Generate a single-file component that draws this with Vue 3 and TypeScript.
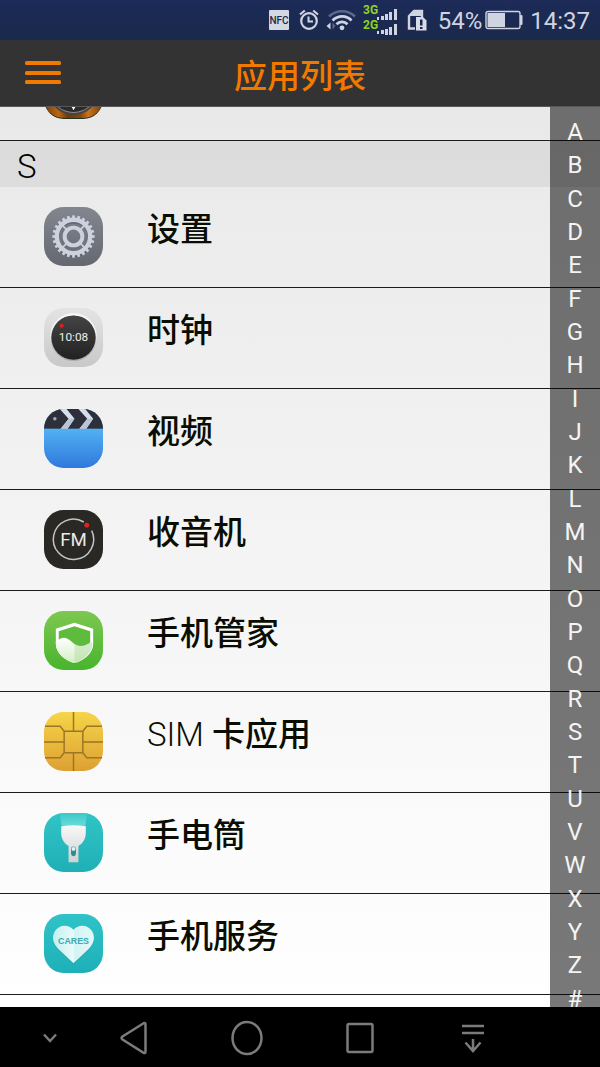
<script setup lang="ts">
interface AppEntry {
  id: string
  name: string
  latin?: string
}

const section = 'S'

const apps: AppEntry[] = [
  { id: 'settings', name: '设置' },
  { id: 'clock', name: '时钟' },
  { id: 'video', name: '视频' },
  { id: 'radio', name: '收音机' },
  { id: 'manager', name: '手机管家' },
  { id: 'sim', latin: 'SIM', name: ' 卡应用' },
  { id: 'torch', name: '手电筒' },
  { id: 'service', name: '手机服务' },
]

const letters: string[] = [...'ABCDEFGHIJKLMNOPQRSTUVWXYZ#']

const teeth: number[] = Array.from({ length: 24 }, (_, i) => i * 15)
</script>

<template>
  <div class="screen">
    <div class="status">
      <svg class="st-nfc" viewBox="0 0 20 20" width="20" height="20" aria-hidden="true">
        <rect width="20" height="20" rx="1" fill="#d3d8e3" />
        <text x="10" y="14" text-anchor="middle" font-family="Roboto, sans-serif" font-size="10" font-weight="500" fill="#1b284d">NFC</text>
      </svg>
      <svg class="st-alarm" viewBox="0 0 20 22" width="20" height="22" fill="none" stroke="#cfd4e0" aria-hidden="true">
        <circle cx="10" cy="12" r="7.8" stroke-width="2.2" />
        <path d="M1 5.500 5.800 1.500M19 5.500 14.200 1.500" stroke-width="2.200" />
        <path d="M9.500 7.500V12.500H14" stroke-width="2" />
      </svg>
      <svg class="st-wifi" viewBox="0 0 31 22" width="31" height="22" fill="none" aria-hidden="true">
        <path d="M3 7.500C10 .4 22 .4 29 7.500" stroke="#5c688a" stroke-width="2.600" />
        <path d="M6.500 11.500C12 6 20.500 6 25.500 11.500" stroke="#cfd4e0" stroke-width="2.800" />
        <path d="M10.500 15.200C13.500 12.200 18.500 12.200 21.500 15.200" stroke="#cfd4e0" stroke-width="2.800" />
        <circle cx="16" cy="18.800" r="2.400" fill="#cfd4e0" />
        <path d="M4.500 13.500V20.500L.5 17z" fill="#cfd4e0" />
        <path d="M6.500 13.500V20.500L9.500 17z" fill="#5c688a" />
      </svg>
      <svg class="st-signal" viewBox="0 0 34 32" width="34" height="32" aria-hidden="true">
        <g font-family="Roboto, sans-serif" font-size="12" font-weight="700" fill="#8fd41c">
          <text x="0" y="10">3G</text>
          <text x="0" y="25">2G</text>
        </g>
        <path d="M14 13h2v3h-2zM18 12h3v4h-3zM22 10h3v6h-3zM26 8h3v8h-3zM31 5h3v11h-3zM14 27h2v3h-2zM18 26h3v4h-3zM22 25h3v6h-3zM26 23h3v8h-3zM31 20h3v11h-3z" fill="#cfd4e0" />
      </svg>
      <svg class="st-card" viewBox="0 0 20 22" width="20" height="22" aria-hidden="true">
        <path d="M2 7 7 2H15V8M8 19.500H2V6.500" fill="none" stroke="#cfd4e0" stroke-width="2.400" />
        <path d="M2 7 7 1h9v6H2z" fill="#cfd4e0" />
        <path d="M9 8h7l3.500 3.500V21.500H9z" fill="#d8dce6" />
        <path d="M13 10.500h2.500v6H13zM13 18h2.500v2H13z" fill="#1b284d" />
      </svg>
      <span class="st-percent">54%</span>
      <svg class="st-battery" viewBox="0 0 38 20" width="38" height="20" aria-hidden="true">
        <rect x="1" y="1.500" width="34" height="17" rx="2" fill="none" stroke="#cfd4e0" stroke-width="1.400" />
        <rect x="2.500" y="3" width="17.500" height="14" fill="#cfd4e0" />
        <rect x="35" y="5" width="2.500" height="10" rx="1" fill="#cfd4e0" />
      </svg>
      <time class="st-time">14:37</time>
    </div>

    <header class="bar">
      <button class="menu" type="button" aria-label="菜单">
        <svg viewBox="0 0 36 24" width="36" height="24" fill="#f27900">
          <rect y="0" width="36" height="4" rx="1.500" />
          <rect y="10" width="36" height="4" rx="1.500" />
          <rect y="19" width="36" height="4" rx="1.500" />
        </svg>
      </button>
      <h1>应用列表</h1>
    </header>

    <main class="body">
      <div class="list">
        <div class="row tail">
          <svg class="icon" viewBox="0 0 60 60" aria-hidden="true">
            <defs>
              <linearGradient id="wood" x1="0" x2="1" y1="0" y2="0">
                <stop offset="0" stop-color="#7a3c08" />
                <stop offset=".25" stop-color="#bd6812" />
                <stop offset=".4" stop-color="#71370a" />
                <stop offset=".62" stop-color="#8a450b" />
                <stop offset=".75" stop-color="#c9741a" />
                <stop offset="1" stop-color="#7a3c08" />
              </linearGradient>
            </defs>
            <rect width="60" height="60" rx="20" fill="#26321c" />
            <rect width="60" height="59" rx="20" fill="url(#wood)" />
            <circle cx="30" cy="30" r="26" fill="#444" />
            <circle cx="30" cy="30" r="24" fill="#8a8a8a" />
            <circle cx="30" cy="29.500" r="23.500" fill="#2b2b2b" />
            <path d="M28 47.500h4L30 51z" fill="#fff" />
          </svg>
        </div>

        <h2>{{ section }}</h2>

        <a v-for="app in apps" :key="app.id" class="row" :href="'#' + app.id">
          <svg v-if="app.id === 'settings'" class="icon" viewBox="0 0 60 60" aria-hidden="true">
            <defs>
              <linearGradient id="slate" x1="0" x2="0" y1="0" y2="1">
                <stop offset="0" stop-color="#84868f" />
                <stop offset="1" stop-color="#646870" />
              </linearGradient>
            </defs>
            <rect width="60" height="60" rx="20" fill="url(#slate)" />
            <circle cx="30" cy="32" r="17" fill="none" stroke="#50545e" stroke-width="4" opacity=".5" />
            <g stroke="#cdd1de" fill="none">
              <circle cx="30" cy="30" r="17" stroke-width="4.400" />
              <circle cx="30" cy="30" r="9" stroke-width="4" />
              <path d="M19 19l4.500 4.500M41 19l-4.500 4.500M19 41l4.500-4.500M41 41l-4.500-4.500" stroke-width="1.800" />
              <path v-for="angle in teeth" :key="angle" d="M30 8.500V12" stroke-width="2.800" :transform="`rotate(${angle} 30 30)`" />
            </g>
          </svg>

          <svg v-else-if="app.id === 'clock'" class="icon" viewBox="0 0 60 60" aria-hidden="true">
            <defs>
              <linearGradient id="silver" x1="0" x2="0" y1="0" y2="1">
                <stop offset="0" stop-color="#e4e4e4" />
                <stop offset="1" stop-color="#c8c8c8" />
              </linearGradient>
              <linearGradient id="dial" x1="0" x2="0" y1="0" y2="1">
                <stop offset="0" stop-color="#444" />
                <stop offset="1" stop-color="#222" />
              </linearGradient>
            </defs>
            <rect width="60" height="60" rx="20" fill="url(#silver)" />
            <circle cx="30" cy="28.500" r="23.500" fill="#f6f6f6" />
            <circle cx="30" cy="31" r="23" fill="#999" opacity=".6" />
            <circle cx="30" cy="30" r="22.500" fill="url(#dial)" />
            <circle cx="18" cy="18" r="2" fill="#e02020" />
            <text x="30" y="34" text-anchor="middle" font-family="Roboto, sans-serif" font-size="12" fill="#f0f0f0">10:08</text>
          </svg>

          <svg v-else-if="app.id === 'video'" class="icon" viewBox="0 0 60 60" aria-hidden="true">
            <defs>
              <linearGradient id="sky" x1="0" x2="0" y1="0" y2="1">
                <stop offset=".3" stop-color="#54b4f4" />
                <stop offset="1" stop-color="#2f78dc" />
              </linearGradient>
              <clipPath id="video-clip"><rect width="60" height="60" rx="20" /></clipPath>
            </defs>
            <g clip-path="url(#video-clip)">
              <rect width="60" height="60" fill="url(#sky)" />
              <rect width="60" height="20" fill="#2d303b" />
              <path d="M16 0h7l8 10-7 10h-7l8-10zM35 0h7l8 10-7 10h-7l8-10z" fill="#d5deec" />
              <path d="M25 10h6l-7 10h-7zM44 10h6l-7 10h-7z" fill="#b9c4d6" />
              <circle cx="11" cy="10" r="1.800" fill="#a4a7b0" />
            </g>
          </svg>

          <svg v-else-if="app.id === 'radio'" class="icon" viewBox="0 0 60 60" aria-hidden="true">
            <rect width="60" height="60" rx="20" fill="#292825" />
            <path d="M40.500 12.200A20.500 20.500 0 1 0 48.500 21" fill="none" stroke="#c5c5c5" stroke-width="1.500" />
            <circle cx="43.500" cy="15.500" r="2.500" fill="#e5201c" />
            <text x="30" y="37" text-anchor="middle" font-family="Roboto, sans-serif" font-size="19" fill="#e9e9e9">FM</text>
          </svg>

          <svg v-else-if="app.id === 'manager'" class="icon" viewBox="0 0 60 60" aria-hidden="true">
            <defs>
              <linearGradient id="leaf" x1="0" x2="0" y1="0" y2="1">
                <stop offset="0" stop-color="#7dc850" />
                <stop offset="1" stop-color="#49b42e" />
              </linearGradient>
              <linearGradient id="wave" x1="0" x2="0" y1="0" y2="1">
                <stop offset="0" stop-color="#fff" />
                <stop offset="1" stop-color="#d2efc5" />
              </linearGradient>
            </defs>
            <rect width="60" height="60" rx="20" fill="url(#leaf)" />
            <path d="M31 13 50 19V34C50 44 41 50 31 54 21 50 12 44 12 34V19z" fill="#2f8f1e" opacity=".3" />
            <path d="M31 12 50 18V33C50 43 41 50 31 53 21 50 12 43 12 33V18z" fill="#fff" />
            <path d="M31 15.500 47 20.500V33C47 41 39 47 31 50 23 47 15 41 15 33V20.500z" fill="#5fbb3c" />
            <path d="M12 32C21 22 26 30 31 33.500 37 37.500 43 35.500 48 31L50 33C50 43 41 50 31 53 21 50 12 43 12 33z" fill="url(#wave)" />
            <path d="M31 33.500C37 37.500 43 35.500 48 31L49 34C48 43 41 49 31 53z" fill="#a8d896" opacity=".4" />
          </svg>

          <svg v-else-if="app.id === 'sim'" class="icon" viewBox="0 0 60 60" aria-hidden="true">
            <defs>
              <linearGradient id="gold" x1="0" x2="0" y1="0" y2="1">
                <stop offset="0" stop-color="#f6d548" />
                <stop offset="1" stop-color="#dda033" />
              </linearGradient>
            </defs>
            <rect width="60" height="60" rx="20" fill="url(#gold)" />
            <path d="M20.500 19.500h19v22h-19zM30 0v19.500M30 41.500V60M0 30.500h20.500M39.500 30.500H60M1 14.500h15.500l4 5M59 14.500H43.500l-4 5M1 46.500h15.500l4-5M59 46.500H43.500l-4-5" fill="none" stroke="#9b7625" stroke-width="1.500" />
          </svg>

          <svg v-else-if="app.id === 'torch'" class="icon" viewBox="0 0 60 60" aria-hidden="true">
            <defs>
              <linearGradient id="teal-a" x1="0" x2="0" y1="0" y2="1">
                <stop offset="0" stop-color="#31c4c5" />
                <stop offset="1" stop-color="#1fb0b7" />
              </linearGradient>
              <linearGradient id="beam" x1="0" x2="0" y1="0" y2="1">
                <stop offset="0" stop-color="#8ff0ea" stop-opacity=".1" />
                <stop offset="1" stop-color="#8ff0ea" stop-opacity=".6" />
              </linearGradient>
              <linearGradient id="metal" x1="0" x2="0" y1="0" y2="1">
                <stop offset="0" stop-color="#f8f8f8" />
                <stop offset="1" stop-color="#cfd3d4" />
              </linearGradient>
            </defs>
            <rect width="60" height="60" rx="20" fill="url(#teal-a)" />
            <path d="M16 0h28l-2 13H18z" fill="url(#beam)" />
            <path d="M17.500 13.500Q30 11.500 42.500 13.500V20C42.500 27 39 31 35 33.500V50H25V33.500C21 31 17.500 27 17.500 20z" fill="url(#metal)" />
            <rect x="27.500" y="34" width="5" height="10" rx="2.500" fill="#2a8e95" />
            <circle cx="30" cy="36.500" r="2" fill="#e8f4f4" />
          </svg>

          <svg v-else class="icon" viewBox="0 0 60 60" aria-hidden="true">
            <defs>
              <linearGradient id="teal-b" x1="0" x2="0" y1="0" y2="1">
                <stop offset="0" stop-color="#2fc3c7" />
                <stop offset="1" stop-color="#1eb0b8" />
              </linearGradient>
              <linearGradient id="heart" x1="0" x2="1" y1="0" y2="0">
                <stop offset="0" stop-color="#c4eff0" />
                <stop offset=".5" stop-color="#e9fafa" />
                <stop offset=".51" stop-color="#d3f3f4" />
                <stop offset="1" stop-color="#e4f8f8" />
              </linearGradient>
            </defs>
            <rect width="60" height="60" rx="20" fill="url(#teal-b)" />
            <path d="M30 17C25 10.500 15 11 11 18 6.500 27 11 33 17 39L30 51 43 39C49 33 53.500 27 49 18 45 11 35 10.500 30 17z" fill="#158c94" opacity=".35" />
            <path d="M30 16C25 10 15 10.500 11 17.500 6.500 26 11 32 17 38L30 50 43 38C49 32 53.500 26 49 17.500 45 10.500 35 10 30 16z" fill="url(#heart)" />
            <text x="30" y="31" text-anchor="middle" font-family="Liberation Sans, sans-serif" font-size="9" font-weight="700" fill="#3aa9b3">CARES</text>
          </svg>
          <span class="name"><span v-if="app.latin" class="latin">{{ app.latin }}</span>{{ app.name }}</span>
        </a>
      </div>

      <nav class="index" aria-label="字母索引">
        <a v-for="letter in letters" :key="letter" :href="'#index-' + letter">{{ letter }}</a>
      </nav>
    </main>

    <footer class="keys">
      <button type="button" class="hide" aria-label="收起">
        <svg viewBox="0 0 16 12" width="16" height="12"><path d="M2 2.500 8 9l6-6.500" /></svg>
      </button>
      <button type="button" aria-label="返回">
        <svg viewBox="0 0 28 36" width="28" height="36"><path d="M24 3 2.500 16.500Q.5 18 2.500 19.500L24 33Q25.500 33.500 25.500 31.500V4.500Q25.500 2.500 24 3z" /></svg>
      </button>
      <button type="button" aria-label="主屏幕">
        <svg viewBox="0 0 32 36" width="32" height="36"><ellipse cx="16" cy="18" rx="14.500" ry="16" /></svg>
      </button>
      <button type="button" aria-label="最近任务">
        <svg viewBox="0 0 28 32" width="28" height="32"><rect x="1.500" y="2" width="25" height="28" rx="1.500" /></svg>
      </button>
      <button type="button" aria-label="通知面板">
        <svg viewBox="0 0 24 32" width="24" height="32"><path d="M1 4h22M1 11h22M12 17v12M4.500 20.500l7.500 8.500 7.500-8.500" /></svg>
      </button>
    </footer>
  </div>
</template>

<style>
body {
  margin: 0;
  background: #000;
}
</style>

<style scoped>
.screen {
  display: flex;
  flex-direction: column;
  height: 100vh;
  overflow: hidden;
  font-family: Roboto, "Noto Sans CJK SC", sans-serif;
}

.status {
  flex: none;
  display: flex;
  align-items: center;
  justify-content: flex-end;
  box-sizing: border-box;
  height: 40px;
  padding-right: 10px;
  background: linear-gradient(#1c2b58, #1b294c);
  color: #cfd4e0;
  font-size: 24px;
  line-height: 40px;
}

.status svg {
  flex: none;
}

.st-alarm {
  margin-left: 10px;
}

.st-wifi {
  margin-left: 7px;
}

.st-signal {
  margin-left: 6px;
}

.st-card {
  margin-left: 10px;
}

.st-percent {
  margin-left: 11px;
}

.st-battery {
  margin-left: 3px;
}

.st-percent,
.st-time {
  padding-top: 2px;
}

.st-time {
  margin-left: 7px;
}

.bar {
  flex: none;
  display: grid;
  grid-template-columns: 86px 1fr 86px;
  align-items: center;
  height: 66px;
  border-bottom: 1px solid #5a5656;
  background: #333;
}

.menu {
  display: flex;
  align-items: center;
  justify-content: center;
  height: 66px;
  padding: 0;
  border: 0;
  background: none;
}

h1 {
  margin: 0;
  padding-top: 8px;
  color: #f27900;
  font-size: 33px;
  font-weight: 500;
  line-height: 48px;
  text-align: center;
}

.body {
  position: relative;
  flex: 1;
  min-height: 0;
  overflow: hidden;
  background: linear-gradient(#e9e9e9, #fff);
}

.row {
  display: flex;
  align-items: flex-start;
  gap: 44px;
  box-sizing: border-box;
  height: 101px;
  padding: 20px 0 0 44px;
  border-bottom: 1px solid #1c1c1c;
  color: #0a0e02;
  text-decoration: none;
}

.tail {
  align-items: flex-end;
  height: 34px;
  padding: 0 0 21px 44px;
  overflow: hidden;
}

.icon {
  flex: none;
  width: 59px;
  height: 59px;
}

.name {
  font-size: 33px;
  font-weight: 500;
  line-height: 46px;
  white-space: pre-wrap;
}

.latin {
  font-weight: 300;
}

h2 {
  box-sizing: border-box;
  height: 46px;
  margin: 0;
  padding: 3px 0 0 17px;
  background: rgba(0, 0, 0, 0.06);
  color: #000;
  font-size: 33px;
  font-weight: 300;
  line-height: 46px;
}

.index {
  position: absolute;
  top: 0;
  right: 0;
  bottom: 0;
  display: grid;
  grid-template-rows: repeat(27, minmax(0, 1fr));
  width: 50px;
  background: rgba(0, 0, 0, 0.53);
}

.index a {
  color: #f4f4f4;
  font-size: 24px;
  line-height: 50px;
  text-align: center;
  text-decoration: none;
}

.keys {
  flex: none;
  display: grid;
  grid-template-columns: 77fr 113fr 113fr 113fr 113fr 71fr;
  height: 60px;
  background: #000;
}

.keys button {
  display: flex;
  align-items: center;
  justify-content: center;
  padding: 2px 0 0;
  border: 0;
  background: none;
}

.keys .hide {
  padding-left: 23px;
}

.keys svg {
  fill: none;
  stroke: #7b7b7b;
  stroke-width: 2.5;
}
</style>
